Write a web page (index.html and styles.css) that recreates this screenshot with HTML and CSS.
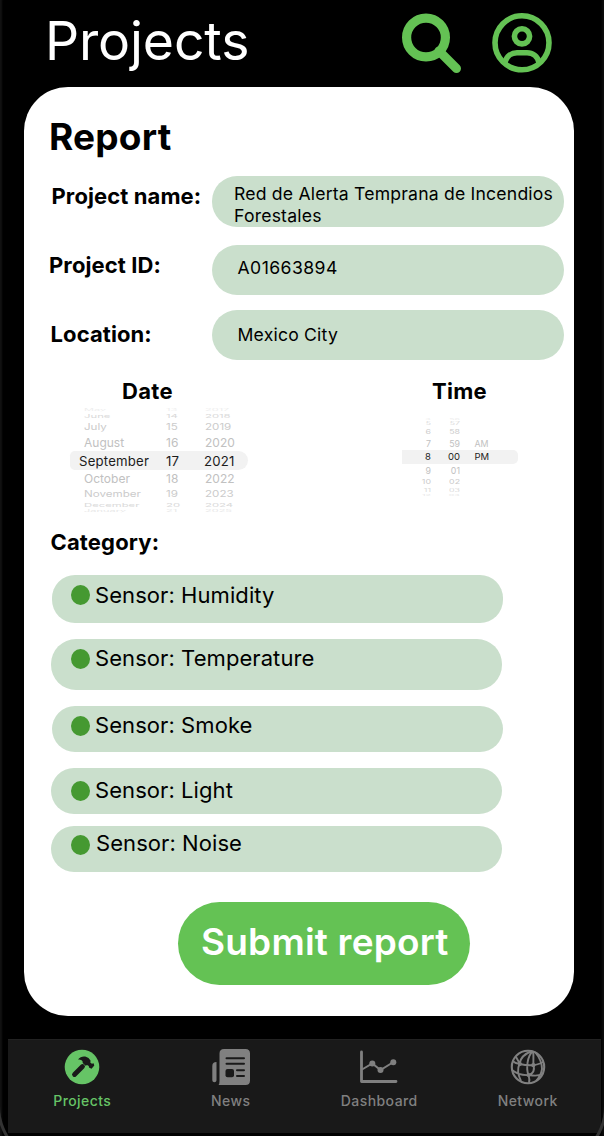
FILE: index.html
```html
<!DOCTYPE html>
<html lang="en">
<head>
<meta charset="utf-8">
<title>Projects</title>
<link rel="stylesheet" href="styles.css">
</head>
<body>
<div class="phone">
  <header class="header">
    <h1 class="title">Projects</h1>
    <svg class="search" width="64" height="64" viewBox="0 0 64 64" fill="none" stroke="#64c254"><circle cx="26" cy="26.5" r="19.4" stroke-width="9.2"/><path d="M39 40 56.5 57.5" stroke-width="9" stroke-linecap="round"/></svg>
    <svg class="account" width="60" height="64" viewBox="0 0 60 64" fill="none" stroke="#64c254" stroke-width="5.6"><circle cx="30" cy="31.8" r="27"/><circle cx="30" cy="25.3" r="7.6"/><path d="M12.8 52C14.500 45 19.500 41.800 25 41.800H35C40.500 41.800 45.500 45 47.200 52"/></svg>
  </header>
  <main class="card">
    <h2 class="heading">Report</h2>
    <div class="field field-name"><label class="label">Project name:</label><div class="input">Red de Alerta Temprana de Incendios<br>Forestales</div></div>
    <div class="field field-id"><label class="label">Project ID:</label><div class="input">A01663894</div></div>
    <div class="field field-location"><label class="label">Location:</label><div class="input">Mexico City</div></div>
    <div class="pickers">
      <section class="date">
        <h3 class="picker-title">Date</h3>
        <div class="wheel date-wheel">
          <div class="row r0"><span>May</span><span>13</span><span>2017</span></div>
          <div class="row r1"><span>June</span><span>14</span><span>2018</span></div>
          <div class="row r2"><span>July</span><span>15</span><span>2019</span></div>
          <div class="row r3"><span>August</span><span>16</span><span>2020</span></div>
          <div class="row r4"><span>September</span><span>17</span><span>2021</span></div>
          <div class="row r5"><span>October</span><span>18</span><span>2022</span></div>
          <div class="row r6"><span>November</span><span>19</span><span>2023</span></div>
          <div class="row r7"><span>December</span><span>20</span><span>2024</span></div>
          <div class="row r8"><span>January</span><span>21</span><span>2025</span></div>
        </div>
      </section>
      <section class="time">
        <h3 class="picker-title">Time</h3>
        <div class="wheel time-wheel">
          <div class="row r0"><span>4</span><span>56</span><span></span></div>
          <div class="row r1"><span>5</span><span>57</span><span></span></div>
          <div class="row r2"><span>6</span><span>58</span><span></span></div>
          <div class="row r3"><span>7</span><span>59</span><span>AM</span></div>
          <div class="row r4"><span>8</span><span>00</span><span>PM</span></div>
          <div class="row r5"><span>9</span><span>01</span><span></span></div>
          <div class="row r6"><span>10</span><span>02</span><span></span></div>
          <div class="row r7"><span>11</span><span>03</span><span></span></div>
          <div class="row r8"><span>12</span><span>04</span><span></span></div>
        </div>
      </section>
    </div>
    <h3 class="category">Category:</h3>
    <ul class="sensors">
      <li class="sensor humidity"><i class="dot"></i><span>Sensor: Humidity</span></li>
      <li class="sensor temperature"><i class="dot"></i><span>Sensor: Temperature</span></li>
      <li class="sensor smoke"><i class="dot"></i><span>Sensor: Smoke</span></li>
      <li class="sensor light"><i class="dot"></i><span>Sensor: Light</span></li>
      <li class="sensor noise"><i class="dot"></i><span>Sensor: Noise</span></li>
    </ul>
    <button class="submit">Submit report</button>
  </main>
  <nav class="tabs">
    <a class="tab active"><svg width="40" height="40" viewBox="0 0 40 40"><circle cx="20" cy="20" r="17.3" fill="#66c466"/><path d="M12.500 27.500 20.500 19.500" stroke="#191919" stroke-width="4.800" stroke-linecap="round"/><path d="M16 12.500C18.500 9 23.500 8.500 26.500 11L28.500 13.500 28.400 15.700 30 16.800 31.600 16.200 32.300 18.500 29.500 21.700 27 20.600 26.800 18.900 25 18 23.600 18.700 20.700 15.900C21 13.500 19 12.500 16 12.500Z" fill="#191919"/></svg><span>Projects</span></a>
    <a class="tab"><svg width="40" height="40" viewBox="0 0 40 40"><path d="M13 2H34.500Q39 2 39 6.500V33.500Q39 38 34.500 38H7.500Q8.500 37 8.500 34V6.500Q8.500 2 13 2Z" fill="#808080"/><path d="M5.500 15V33C5.500 36 1.300 36 1.300 33V19Q1.300 15 5.500 15Z" fill="#808080"/><path d="M15.500 11.300H33M15.500 16.800H33M26 23.200H33M26 29H33" stroke="#191919" stroke-width="2" stroke-linecap="round"/><rect x="14.500" y="22" width="8.500" height="8.300" rx="2" fill="#191919"/></svg><span>News</span></a>
    <a class="tab"><svg width="40" height="40" viewBox="0 0 40 40" fill="none" stroke="#808080"><path d="M2.500 5V34.500H37" stroke-width="2.800" stroke-linecap="round" stroke-linejoin="round"/><path d="M3 22.500 13.300 16.500 21.500 23 34.500 15" stroke-width="2"/><g fill="#808080" stroke="none"><circle cx="13.300" cy="16.500" r="3"/><circle cx="21.500" cy="23" r="3"/><circle cx="34.300" cy="15.200" r="3"/></g></svg><span>Dashboard</span></a>
    <a class="tab"><svg width="40" height="40" viewBox="0 0 40 40" fill="none" stroke="#808080" stroke-width="1.900"><circle cx="20" cy="20" r="16.200" stroke-width="2.100"/><path d="M24 4C16 7 12 12 11.500 17 9 22 10 28 13 34M25 4C19 9 18 22 20.500 28Q22 33 21 36M25 4C26 10 25 13 25.500 18 27 24 24 27 21 28M27 5C32 11 34 17 34 22Q33 29 28 34M4.500 14Q8 17 12 17C20 19 28 19 35 15M4 23C9 27 15 28.500 21 28 27 29 31 29 34 27M8 10 12 17"/><g fill="#808080" stroke="none"><circle cx="12" cy="17" r="2"/><circle cx="25.300" cy="18.200" r="2.100"/><circle cx="20.500" cy="28" r="2.100"/></g></svg><span>Network</span></a>
  </nav>
  <div class="bezel"></div>
</div>
</body>
</html>
```
FILE: styles.css
```css
* { box-sizing: border-box; }
body { margin: 0; background: #000; font-family: Inter, "Liberation Sans", sans-serif; }
h1, h2, h3, ul { margin: 0; padding: 0; }
.phone { position: relative; width: 604px; height: 1136px; overflow: hidden; background: #000; box-shadow: inset 3px 0 2px -1px #121212, inset -3px 0 2px -1px #0c0c0c; }
.header { display: flex; height: 87px; padding-left: 45px; color: #fff; }
.title { width: 355px; padding-top: 11px; font-size: 53.5px; line-height: 60px; font-weight: 400; letter-spacing: -.15px; white-space: nowrap; }
.search { margin-top: 11px; flex: none; }
.account { margin: 11px 0 0 28px; flex: none; }
.card { display: flex; flex-direction: column; width: 550px; height: 929px; margin-left: 24px; background: #fff; border-radius: 44px; color: #000; }
.heading { height: 89px; padding: 30px 0 0 25px; font-size: 37px; line-height: 40px; font-weight: 700; letter-spacing: .2px; }
.field { display: flex; height: 51px; }
.label { width: 188px; font-size: 22px; line-height: 40px; font-weight: 700; letter-spacing: .1px; white-space: nowrap; }
.field-name .label { padding-left: 27.5px; }
.field-id { margin-top: 18px; }
.field-id .label { padding-left: 25px; }
.field-location { margin-top: 14px; }
.field-location .label { padding-left: 26.5px; line-height: 49px; }
.input { width: 352px; height: 51px; padding: 7px 0 0 22px; background: #cadfcc; border-radius: 25px; font-size: 17.6px; line-height: 22px; font-weight: 400; letter-spacing: .2px; white-space: nowrap; }
.field-id .input, .field-location .input { height: 50px; padding: 12px 0 0 25.5px; }
.field-id .input { letter-spacing: .45px; }
.field-location .input { padding-top: 14px; }
.pickers { display: flex; height: 161px; padding: 15px 0 0 46px; }
.date { width: 332px; }
.picker-title { height: 32px; font-size: 22px; line-height: 30px; font-weight: 700; letter-spacing: .3px; }
.date .picker-title { padding-left: 52px; }
.time .picker-title { padding-left: 30px; }
.wheel { display: flex; flex-direction: column; }
.row { display: grid; flex: none; align-items: center; color: #c1c1c1; line-height: 0; }
.row span { transform-origin: left center; white-space: nowrap; }
.date-wheel { width: 178px; font-size: 12px; }
.date-wheel .row { grid-template-columns: 82px 39px 1fr; padding-left: 14px; }
.date-wheel .r0 { height: 4px; color: #eee; font-size: 11px; }
.date-wheel .r1 { height: 8px; color: #dadada; font-size: 11.3px; }
.date-wheel .r2 { height: 14px; color: #cbcbcb; font-size: 11.6px; }
.date-wheel .r3 { height: 17px; }
.date-wheel .r4 { height: 19px; padding-left: 9px; grid-template-columns: 87px 38px 1fr; background: #f2f2f2; border-radius: 5px 10px 10px 5px; color: #1c1c1c; font-size: 13.2px; letter-spacing: .2px; }
.date-wheel .r5 { height: 17px; }
.date-wheel .r6 { height: 14px; color: #cbcbcb; font-size: 11.6px; }
.date-wheel .r7 { height: 8px; color: #dadada; font-size: 11.3px; }
.date-wheel .r8 { height: 3px; color: #e8e8e8; font-size: 11px; }
.r0 span, .r8 span { transform: scaleY(.25); }
.r1 span, .r7 span { transform: scaleY(.48); }
.r2 span, .r6 span { transform: scaleY(.76); }
.time-wheel { width: 116px; margin-top: 9px; font-size: 8.8px; }
.time-wheel .row { grid-template-columns: 29px 29px 1fr; }
.time-wheel span { text-align: right; }
.time-wheel span:last-child { padding-left: 14.5px; text-align: left; }
.time-wheel .r0 { height: 4px; color: #eee; }
.time-wheel .r1 { height: 5px; color: #dadada; }
.time-wheel .r2 { height: 11px; color: #cbcbcb; }
.time-wheel .r3 { height: 13px; }
.time-wheel .r4 { height: 14px; background: #f2f2f2; border-radius: 0 5px 5px 0; color: #1c1c1c; font-size: 9.5px; }
.time-wheel .r5 { height: 13px; }
.time-wheel .r6 { height: 10px; color: #cbcbcb; }
.time-wheel .r7 { height: 7px; color: #dadada; }
.time-wheel .r8 { height: 2px; color: #e8e8e8; }
.category { height: 53px; padding: 5px 0 0 26.5px; font-size: 22px; line-height: 30px; font-weight: 700; letter-spacing: .15px; }
.sensors { list-style: none; padding-left: 28px; }
.sensor { display: flex; width: 451px; height: 46px; padding: 10px 0 0 19px; background: #cadfcc; border-radius: 23px; font-size: 22px; line-height: 20px; white-space: nowrap; letter-spacing: .07px; font-weight: 400; }
.dot { flex: none; width: 19px; height: 20px; margin-right: 5px; background: #459931; border-radius: 50%; }
.humidity { height: 48px; }
.temperature { height: 51px; margin: 16px 0 16px -1px; padding-left: 20px; border-radius: 25px; line-height: 18px; }
.smoke { line-height: 18px; }
.light { margin: 16px 0 12px -1px; padding: 13px 0 0 20px; line-height: 18px; }
.noise { margin-left: -1px; padding: 9px 0 0 20px; line-height: 17px; }
.noise .dot { margin-right: 6px; }
.submit { width: 292px; height: 83px; margin: 30px 0 0 154px; padding: 0 0 4px 23px; border: 0; border-radius: 42px; background: #64c254; color: #fff; font: 600 37px/79px Inter, sans-serif; letter-spacing: .2px; text-align: left; white-space: nowrap; }
.tabs { display: flex; width: 593px; height: 94px; margin: 23px 0 0 8px; background: #191919; border-top: 1px solid #222; }
.tab { display: flex; flex: none; flex-direction: column; align-items: center; width: 148.5px; padding-top: 7px; color: #808080; font-size: 14px; line-height: 20px; font-weight: 500; }
.tab span { margin-top: 4px; letter-spacing: .42px; }
.active { color: #66c466; }
.bezel { position: absolute; inset: 1060px -3px -30px -3px; border: 3px solid #333; border-top: 0; border-radius: 0 0 60px 60px; pointer-events: none; }
```
